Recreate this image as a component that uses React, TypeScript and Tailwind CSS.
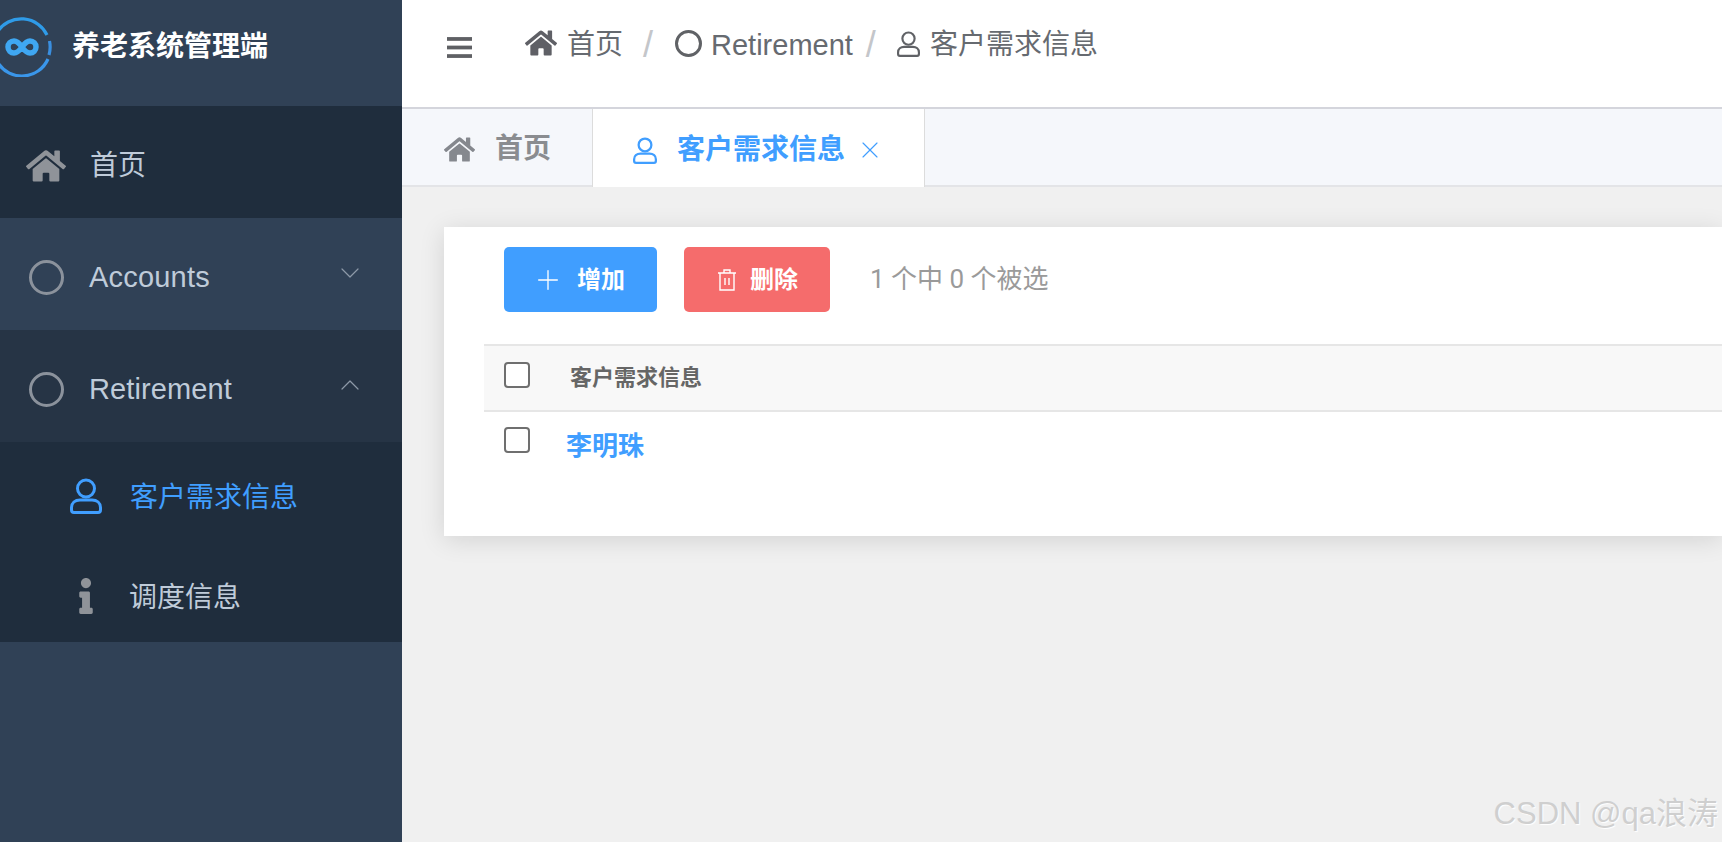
import { FaHome, FaInfo } from "react-icons/fa";
import { ChevronDown, ChevronUp, Plus, X } from "lucide-react";

const font = "font-['Liberation_Sans','Noto_Sans_CJK_SC',sans-serif]";

function UserIcon({ className }: { className?: string }) {
  return (
    <svg viewBox="0 0 32 36" fill="none" stroke="currentColor" strokeWidth="3" className={className}>
      <circle cx="16" cy="10.5" r="8.5" />
      <path d="M10 22h12c5 0 8.5 3 8.5 7.5v2.5c0 1.5-1 2.5-2.5 2.5H4c-1.500 0-2.500-1-2.500-2.500v-2.500C1.500 25 5 22 10 22z" />
    </svg>
  );
}

function Logo() {
  return (
    <svg viewBox="0 0 60 60" fill="none" className="w-[60px] h-[60px] shrink-0 -ml-[8px]">
      <path d="M6 14A28.500 28.500 0 0 1 55 18" stroke="#2f9be8" strokeWidth="3.200" />
      <path d="M57.500 24A28.500 28.500 0 0 1 57 38" stroke="#3a8fe0" strokeWidth="3.200" />
      <path d="M56 42A28.500 28.500 0 0 1 6 46" stroke="#3a96ea" strokeWidth="3.200" />
      <path
        d="M30 30c-2.500-3.500-5-6-8-6a6 6 0 0 0 0 12c3 0 5.500-2.500 8-6s5-6 8-6a6 6 0 0 1 0 12c-3 0-5.500-2.500-8-6z"
        stroke="#3fa7f2"
        strokeWidth="5.500"
      />
    </svg>
  );
}

function Ring({ className }: { className?: string }) {
  return <span className={`block rounded-full border-[3px] shrink-0 ${className}`} />;
}

function Sidebar() {
  return (
    <aside className="w-[402px] h-full shrink-0 bg-[#304156] flex flex-col text-[28px] text-[#bfcbd9]">
      <div className="h-[106px] flex items-center gap-[20px] pb-[12px]">
        <Logo />
        <span className="font-bold text-white">养老系统管理端</span>
      </div>

      <div className="h-[112px] flex items-center bg-[#1f2d3d] pl-[26px] pt-[7px]">
        <FaHome size={40} className="text-[#8f9399] shrink-0" />
        <span className="ml-[24px] pt-[1px]">首页</span>
      </div>

      <div className="h-[112px] flex items-center pl-[29px] pr-[36px] pt-[7px]">
        <Ring className="w-[35px] h-[35px] border-[#8b929c]" />
        <span className="ml-[25px] flex-1 text-[29px] tracking-[0.2px] pt-[1px]">Accounts</span>
        <ChevronDown size={32} strokeWidth={0.9} className="text-[#8d99a8] -mt-[10px]" />
      </div>

      <div className="h-[112px] flex items-center pl-[29px] pr-[36px] pt-[7px] bg-[#263445]">
        <Ring className="w-[35px] h-[35px] border-[#8b929c]" />
        <span className="ml-[25px] flex-1 text-[29px] tracking-[0.1px] pt-[1px]">Retirement</span>
        <ChevronUp size={32} strokeWidth={0.9} className="text-[#8d99a8] -mt-[10px]" />
      </div>

      <div className="bg-[#1f2d3d]">
        <div className="h-[100px] flex items-center pl-[70px] pt-[7px] text-[#409eff]">
          <UserIcon className="w-[32px] h-[36px] shrink-0" />
          <span className="ml-[28px] pt-[4px]">客户需求信息</span>
        </div>
        <div className="h-[100px] flex items-center pl-[70px] pt-[7px]">
          <span className="w-[32px] flex justify-center shrink-0">
            <FaInfo size={36} className="text-[#8f9399]" />
          </span>
          <span className="ml-[27px] pt-[4px]">调度信息</span>
        </div>
      </div>
    </aside>
  );
}

function Breadcrumb() {
  return (
    <header className="h-[107px] shrink-0 bg-white flex items-start pt-[27px] text-[28px] leading-[36px] text-[#666a70]">
      <svg viewBox="0 0 24 20" className="w-[25px] h-[21px] ml-[45px] mt-[10px] shrink-0 text-[#5f6064]" fill="currentColor">
        <rect x="0" y="0" width="24" height="3.600" />
        <rect x="0" y="8.200" width="24" height="3.600" />
        <rect x="0" y="16.400" width="24" height="3.600" />
      </svg>
      <FaHome size={32} className="ml-[53px] shrink-0 text-[#5f6066]" />
      <span className="ml-[10px]">首页</span>
      <span className="ml-[20px] text-[36px] leading-[36px] text-[#c4c6ca]">/</span>
      <Ring className="w-[27px] h-[27px] border-[#606266] ml-[22px] mt-[3px]" />
      <span className="ml-[9px] text-[29px]">Retirement</span>
      <span className="ml-[13px] text-[36px] leading-[36px] text-[#c4c6ca]">/</span>
      <UserIcon className="w-[23px] h-[28px] ml-[21px] mt-[3px] shrink-0 text-[#606266]" />
      <span className="ml-[10px]">客户需求信息</span>
    </header>
  );
}

function Tabs() {
  return (
    <div className="h-[80px] shrink-0 flex border-t-2 border-t-[#d4d5dc] border-b-2 border-b-[#e3e4e7] bg-[#f5f7fb] text-[28px]">
      <div className="w-[190px] flex items-center pl-[42px] pt-[4px] text-[#85888e] font-bold">
        <FaHome size={31} className="shrink-0" />
        <span className="ml-[20px] text-[#8a8c90]">首页</span>
      </div>
      <div className="w-[333px] -mb-[2px] flex items-center bg-white border-x border-x-[#dcdcdc] pl-[40px] pt-[4px] text-[#409eff] font-bold">
        <UserIcon className="w-[24px] h-[27px] shrink-0" />
        <span className="ml-[20px]">客户需求信息</span>
        <X size={28} strokeWidth={1} className="ml-[11px] shrink-0" />
      </div>
    </div>
  );
}

function Checkbox() {
  return <span className="block w-[26px] h-[26px] rounded-[4px] border-2 border-[#6f6f6f] bg-white shrink-0" />;
}

function Card() {
  return (
    <section className="h-[309px] bg-white ml-[42px] mt-[40px] shadow-[0_4px_24px_rgba(0,0,0,0.12)] pl-[40px]">
      <div className="h-[117px] flex items-start pt-[20px] pl-[20px]">
        <button className="w-[153px] h-[65px] rounded-[5px] bg-[#409eff] text-white flex items-center pl-[28px] text-[24px] font-bold">
          <Plus size={32} strokeWidth={1} className="shrink-0" />
          <span className="ml-[13px]">增加</span>
        </button>
        <button className="w-[146px] h-[65px] rounded-[5px] bg-[#f56c6c] text-white flex items-center pl-[33px] ml-[27px] text-[24px] font-bold">
          <svg viewBox="0 0 20 24" fill="none" stroke="currentColor" strokeWidth="1.400" className="w-[20px] h-[24px] shrink-0">
            <path d="M1 5h18M3 5v17h14V5M7 5V2h6v3M8 10v7M12 10v7" />
          </svg>
          <span className="ml-[13px]">删除</span>
        </button>
        <span className="ml-[40px] h-[65px] flex items-center text-[26px] text-[#9a9a9a] font-['Roboto','Noto_Sans_CJK_SC',sans-serif]">
          1 个中 0 个被选
        </span>
      </div>
      <div className="h-[68px] flex items-start bg-[#f8f8f8] border-y-2 border-[#e6e6e6] pl-[20px] pt-[16px]">
        <Checkbox />
        <span className="ml-[40px] mt-[-1px] text-[22px] font-bold text-[#666]">客户需求信息</span>
      </div>
      <div className="flex items-start pl-[20px] pt-[15px]">
        <Checkbox />
        <span className="ml-[36px] text-[26px] font-bold text-[#409eff]">李明珠</span>
      </div>
    </section>
  );
}

export default function App() {
  return (
    <div className={`relative flex w-full h-[842px] overflow-hidden bg-[#f0f0f0] ${font}`}>
      <Sidebar />
      <main className="flex-1 flex flex-col min-w-0">
        <Breadcrumb />
        <Tabs />
        <Card />
      </main>
      {/* watermark */}
      <span className="absolute right-[4px] bottom-[10px] text-[31px] leading-[36px] text-[#cfcfcf] [text-shadow:1px_1px_1px_#ffffff]">
        CSDN @qa浪涛
      </span>
    </div>
  );
}
